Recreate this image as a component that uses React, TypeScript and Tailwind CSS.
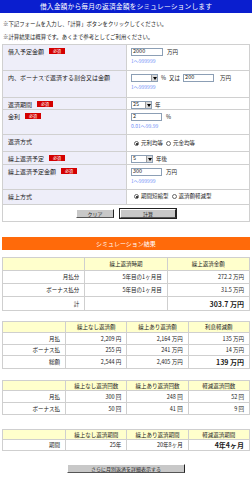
import React from "react";

const hint = "text-[#6f8ff7]";

function Badge() {
  return (
    <span className="ml-[5px] inline-flex h-[6px] w-[16px] items-center justify-center bg-[#d40000] text-[4px] leading-none text-white">
      必須
    </span>
  );
}

function Field({ value, w }: { value: string; w: string }) {
  return (
    <span
      className={`inline-flex h-[8px] items-center border border-[#8c9fb5] bg-white px-[1px] text-[5.5px] leading-none ${w}`}
    >
      {value}
    </span>
  );
}

function Select({ value, w }: { value: string; w: string }) {
  return (
    <span
      className={`inline-flex h-[8px] items-center justify-between border border-[#8c9fb5] bg-white pl-[1px] text-[5.5px] leading-none ${w}`}
    >
      <span>{value}</span>
      <span className="flex h-full w-[6px] items-center justify-center border-l border-[#9a9a9a] bg-[#d8d8d8]">
        <svg width="4" height="3" viewBox="0 0 4 3">
          <path d="M0 0h4L2 3z" fill="#000" />
        </svg>
      </span>
    </span>
  );
}

function Radio({ on, label }: { on?: boolean; label: string }) {
  return (
    <span className="inline-flex items-center gap-[2px]">
      <span className="flex h-[5px] w-[5px] items-center justify-center rounded-full border border-[#666] bg-white">
        {on && <span className="h-[2px] w-[2px] rounded-full bg-black" />}
      </span>
      <span>{label}</span>
    </span>
  );
}

function Hint({ children }: { children: React.ReactNode }) {
  return <div className={`mt-[2px] text-[5px] leading-[6px] ${hint}`}>{children}</div>;
}

const formRows: {
  label: string;
  req?: boolean;
  h: string;
  body: React.ReactNode;
}[] = [
  {
    label: "借入予定金額",
    req: true,
    h: "h-[26px]",
    body: (
      <>
        <div className="flex items-center gap-[4px]">
          <Field value="2000" w="w-[32px]" />
          <span>万円</span>
        </div>
        <Hint>1〜999999</Hint>
      </>
    ),
  },
  {
    label: "内、ボーナスで返済する割合又は金額",
    h: "h-[27px]",
    body: (
      <>
        <div className="flex items-center gap-[3px]">
          <Select value="" w="w-[27px]" />
          <span>%</span>
          <span>又は</span>
          <Field value="200" w="w-[31px]" />
          <span className="ml-[3px]">万円</span>
        </div>
        <Hint>1〜999999</Hint>
      </>
    ),
  },
  {
    label: "返済期間",
    req: true,
    h: "h-[12px]",
    body: (
      <div className="flex items-center gap-[3px]">
        <Select value="25" w="w-[21px]" />
        <span>年</span>
      </div>
    ),
  },
  {
    label: "金利",
    req: true,
    h: "h-[25px]",
    body: (
      <>
        <div className="flex items-center gap-[4px]">
          <Field value="2" w="w-[31px]" />
          <span>%</span>
        </div>
        <Hint>0.01〜99.99</Hint>
      </>
    ),
  },
  {
    label: "返済方式",
    h: "h-[17px]",
    body: (
      <div className="flex items-center gap-[3px] pl-[3px] pt-[2px]">
        <Radio on label="元利均等" />
        <Radio label="元金均等" />
      </div>
    ),
  },
  {
    label: "繰上返済予定",
    req: true,
    h: "h-[13px]",
    body: (
      <div className="flex items-center gap-[3px]">
        <Select value="5" w="w-[22px]" />
        <span>年後</span>
      </div>
    ),
  },
  {
    label: "繰上返済予定金額",
    req: true,
    h: "h-[25px]",
    body: (
      <>
        <div className="flex items-center gap-[4px]">
          <Field value="300" w="w-[31px]" />
          <span>万円</span>
        </div>
        <Hint>1〜999999</Hint>
      </>
    ),
  },
  {
    label: "繰上方式",
    h: "h-[15px]",
    body: (
      <div className="flex items-center gap-[3px] pl-[3px]">
        <Radio on label="期間短縮型" />
        <Radio label="返済額軽減型" />
      </div>
    ),
  },
];

function Btn({ children, w, strong }: { children: React.ReactNode; w: string; strong?: boolean }) {
  return (
    <span
      className={`inline-flex h-[9px] items-center justify-center border border-t-[#fff] border-l-[#fff] border-r-[#222] border-b-[#555] bg-[#c8c8c8] text-[5px] leading-none ${w} ${strong ? "outline outline-1 outline-[#222]" : ""}`}
    >
      {children}
    </span>
  );
}

const th = "border border-[#cfcfcf] bg-[#ffffcc] text-center font-normal";
const td = "border border-[#cfcfcf] bg-white text-right pr-[5px]";

export default function App() {
  return (
    <div className="w-[252px] bg-white pb-[6px] font-['Noto_Sans_CJK_JP',sans-serif] text-[5.5px] leading-[7px] text-[#222]">
      <div className="flex h-[13px] items-center justify-center bg-[#0a1ecf] text-[6.8px] tracking-[0.1px] text-white">
        借入金額から毎月の返済金額をシミュレーションします
      </div>

      <div className="px-[3px] pt-[8px] text-[5.4px] leading-[7px]">
        <p>※下記フォームを入力し、「計算」ボタンをクリックしてください。</p>
        <p className="mt-[6px]">※計算結果は概算です。あくまで参考としてご利用ください。</p>
      </div>

      <div className="mx-[2px] mt-[3px] border border-[#d0d0d0]">
        {formRows.map((r) => (
          <div key={r.label} className={`grid grid-cols-[124px_1fr] border-b border-[#d0d0d0] ${r.h}`}>
            <div className="flex items-start border-r border-[#d0d0d0] bg-[#eeeef9] px-[5px] pt-[3px] text-[6px] leading-[7px]">
              <span>{r.label}</span>
              {r.req && <Badge />}
            </div>
            <div className="px-[4px] pt-[3px]">{r.body}</div>
          </div>
        ))}
        <div className="flex h-[16px] items-center justify-center gap-[6px]">
          <Btn w="w-[38px]">クリア</Btn>
          <Btn w="w-[56px]" strong>
            計算
          </Btn>
        </div>
      </div>

      <div className="mx-[2px] mt-[15px] flex h-[13px] items-center justify-center bg-[#ff6a0a] text-[6px] text-white">
        シミュレーション結果
      </div>

      <table className="mx-[2px] mt-[7px] w-[248px] table-fixed border-collapse text-[5.5px] leading-[6px]">
        <thead>
          <tr className="h-[13px]">
            <th className={th}></th>
            <th className={th}>繰上返済時期</th>
            <th className={th}>繰上返済金額</th>
          </tr>
        </thead>
        <tbody>
          <tr className="h-[13px]">
            <td className={td}>月払分</td>
            <td className={td}>5年目の1ヶ月目</td>
            <td className={td}>272.2 万円</td>
          </tr>
          <tr className="h-[13px]">
            <td className={td}>ボーナス払分</td>
            <td className={td}>5年目の1ヶ月目</td>
            <td className={td}>31.5 万円</td>
          </tr>
          <tr className="h-[14px]">
            <td className={td}>計</td>
            <td className={td}></td>
            <td className={`${td} text-[7px] font-bold`}>303.7 万円</td>
          </tr>
        </tbody>
      </table>

      <table className="mx-[2px] mt-[10px] w-[248px] table-fixed border-collapse text-[5.5px] leading-[6px]">
        <colgroup>
          <col className="w-[63px]" />
          <col />
          <col />
          <col />
        </colgroup>
        <thead>
          <tr className="h-[11px]">
            <th className={th}></th>
            <th className={th}>繰上なし返済額</th>
            <th className={th}>繰上あり返済額</th>
            <th className={th}>利息軽減額</th>
          </tr>
        </thead>
        <tbody>
          <tr className="h-[12px]">
            <td className={td}>月払</td>
            <td className={td}>2,209 円</td>
            <td className={td}>2,164 万円</td>
            <td className={td}>135 万円</td>
          </tr>
          <tr className="h-[11px]">
            <td className={td}>ボーナス払</td>
            <td className={td}>255 円</td>
            <td className={td}>241 万円</td>
            <td className={td}>14 万円</td>
          </tr>
          <tr className="h-[13px]">
            <td className={td}>総額</td>
            <td className={td}>2,544 円</td>
            <td className={td}>2,405 万円</td>
            <td className={`${td} text-[7px] font-bold`}>139 万円</td>
          </tr>
        </tbody>
      </table>

      <table className="mx-[2px] mt-[11px] w-[248px] table-fixed border-collapse text-[5.5px] leading-[6px]">
        <colgroup>
          <col className="w-[63px]" />
          <col />
          <col />
          <col />
        </colgroup>
        <thead>
          <tr className="h-[10px]">
            <th className={th}></th>
            <th className={th}>繰上なし返済回数</th>
            <th className={th}>繰上あり返済回数</th>
            <th className={th}>軽減返済回数</th>
          </tr>
        </thead>
        <tbody>
          <tr className="h-[12px]">
            <td className={td}>月払</td>
            <td className={td}>300 回</td>
            <td className={td}>248 回</td>
            <td className={td}>52 回</td>
          </tr>
          <tr className="h-[12px]">
            <td className={td}>ボーナス払</td>
            <td className={td}>50 回</td>
            <td className={td}>41 回</td>
            <td className={td}>9 回</td>
          </tr>
        </tbody>
      </table>

      <table className="mx-[2px] mt-[14px] w-[248px] table-fixed border-collapse text-[5.5px] leading-[6px]">
        <colgroup>
          <col className="w-[63px]" />
          <col />
          <col />
          <col />
        </colgroup>
        <thead>
          <tr className="h-[10px]">
            <th className={th}></th>
            <th className={th}>繰上なし返済期間</th>
            <th className={th}>繰上あり返済期間</th>
            <th className={th}>軽減返済期間</th>
          </tr>
        </thead>
        <tbody>
          <tr className="h-[11px]">
            <td className={td}>期間</td>
            <td className={td}>25年</td>
            <td className={td}>20年8ヶ月</td>
            <td className={`${td} text-[7px] font-bold`}>4年4ヶ月</td>
          </tr>
        </tbody>
      </table>

      <div className="mt-[13px] flex justify-center">
        <Btn w="w-[118px]">さらに月別返済を詳細表示する</Btn>
      </div>
    </div>
  );
}
